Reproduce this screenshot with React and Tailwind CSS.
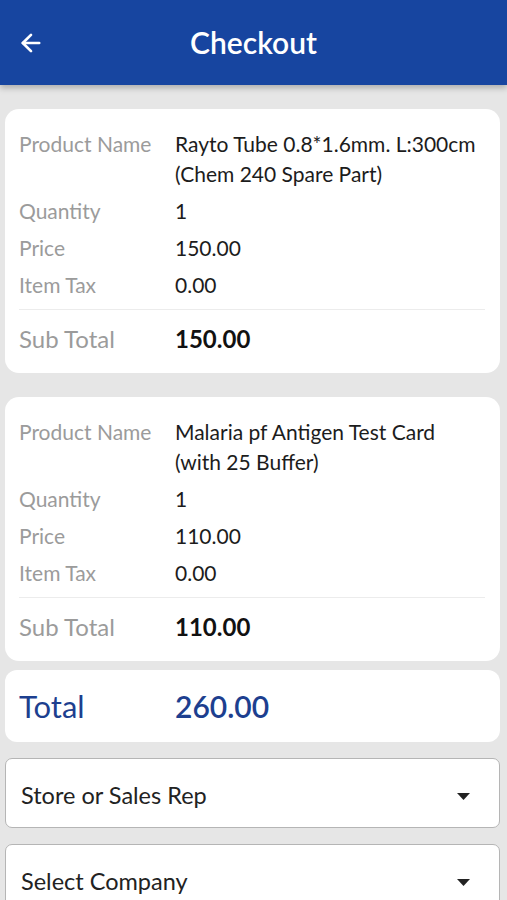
import React from 'react';
import { ArrowLeft } from 'lucide-react';

const items = [
  {
    name: 'Rayto Tube 0.8*1.6mm. L:300cm (Chem 240 Spare Part)',
    quantity: '1',
    price: '150.00',
    tax: '0.00',
    subtotal: '150.00',
  },
  {
    name: 'Malaria pf Antigen Test Card (with 25 Buffer)',
    quantity: '1',
    price: '110.00',
    tax: '0.00',
    subtotal: '110.00',
  },
];

function Row({ label, value }) {
  return (
    <div className="flex text-[21px] leading-[30px] mb-[7px]">
      <div className="w-[156px] shrink-0 text-[#9b9b9b]">{label}</div>
      <div className="flex-1 text-[#1c1c1c]">{value}</div>
    </div>
  );
}

function ItemCard({ item }) {
  return (
    <div className="bg-white rounded-[14px] pl-[14px] pr-[20px] pt-[20px] pb-[19px]">
      <Row label="Product Name" value={item.name} />
      <Row label="Quantity" value={item.quantity} />
      <Row label="Price" value={item.price} />
      <Row label="Item Tax" value={item.tax} />
      <div className="h-px bg-[#ececec] mt-[9px] mb-[14px] -mr-[5px]" />
      <div className="flex text-[24px] leading-[30px]">
        <div className="w-[156px] shrink-0 text-[#9b9b9b]">Sub Total</div>
        <div className="flex-1 text-[#111] font-bold">{item.subtotal}</div>
      </div>
    </div>
  );
}

function Dropdown({ label }) {
  return (
    <div className="bg-white border border-[#b5b5b5] rounded-[7px] h-[70px] flex items-center justify-between pl-[15px] pr-[29px] pt-[6px]">
      <span className="text-[23.5px] text-[#222]">{label}</span>
      <svg width="13" height="7" viewBox="0 0 13 7">
        <path d="M0 0 L13 0 L6.5 7 Z" fill="#222" />
      </svg>
    </div>
  );
}

export default function App() {
  return (
    <div className="min-h-screen bg-[#e6e6e6] font-['Lato','Open_Sans',sans-serif]">
      <header className="relative h-[85px] bg-[#1745a0] flex items-center justify-center shadow-[0_3px_6px_rgba(0,0,0,0.25)]">
        <button type="button" className="absolute left-[17px] top-1/2 -translate-y-1/2 text-white">
          <ArrowLeft className="w-[28px] h-[28px]" strokeWidth={2.3} />
        </button>
        <h1 className="text-white text-[30px] font-semibold">Checkout</h1>
      </header>

      <main className="pl-[5px] pr-[7px] pt-[24px] pb-4">
        <ItemCard item={items[0]} />
        <div className="h-[24px]" />
        <ItemCard item={items[1]} />

        <div className="mt-[9px] bg-white rounded-[12px] h-[72px] flex items-center pl-[14px]">
          <div className="w-[156px] shrink-0 text-[31px] text-[#1d3f8f]">Total</div>
          <div className="text-[30px] font-semibold text-[#1d3f8f]">260.00</div>
        </div>

        <div className="mt-[16px] flex flex-col gap-[16px]">
          <Dropdown label="Store or Sales Rep" />
          <Dropdown label="Select Company" />
        </div>
      </main>
    </div>
  );
}
